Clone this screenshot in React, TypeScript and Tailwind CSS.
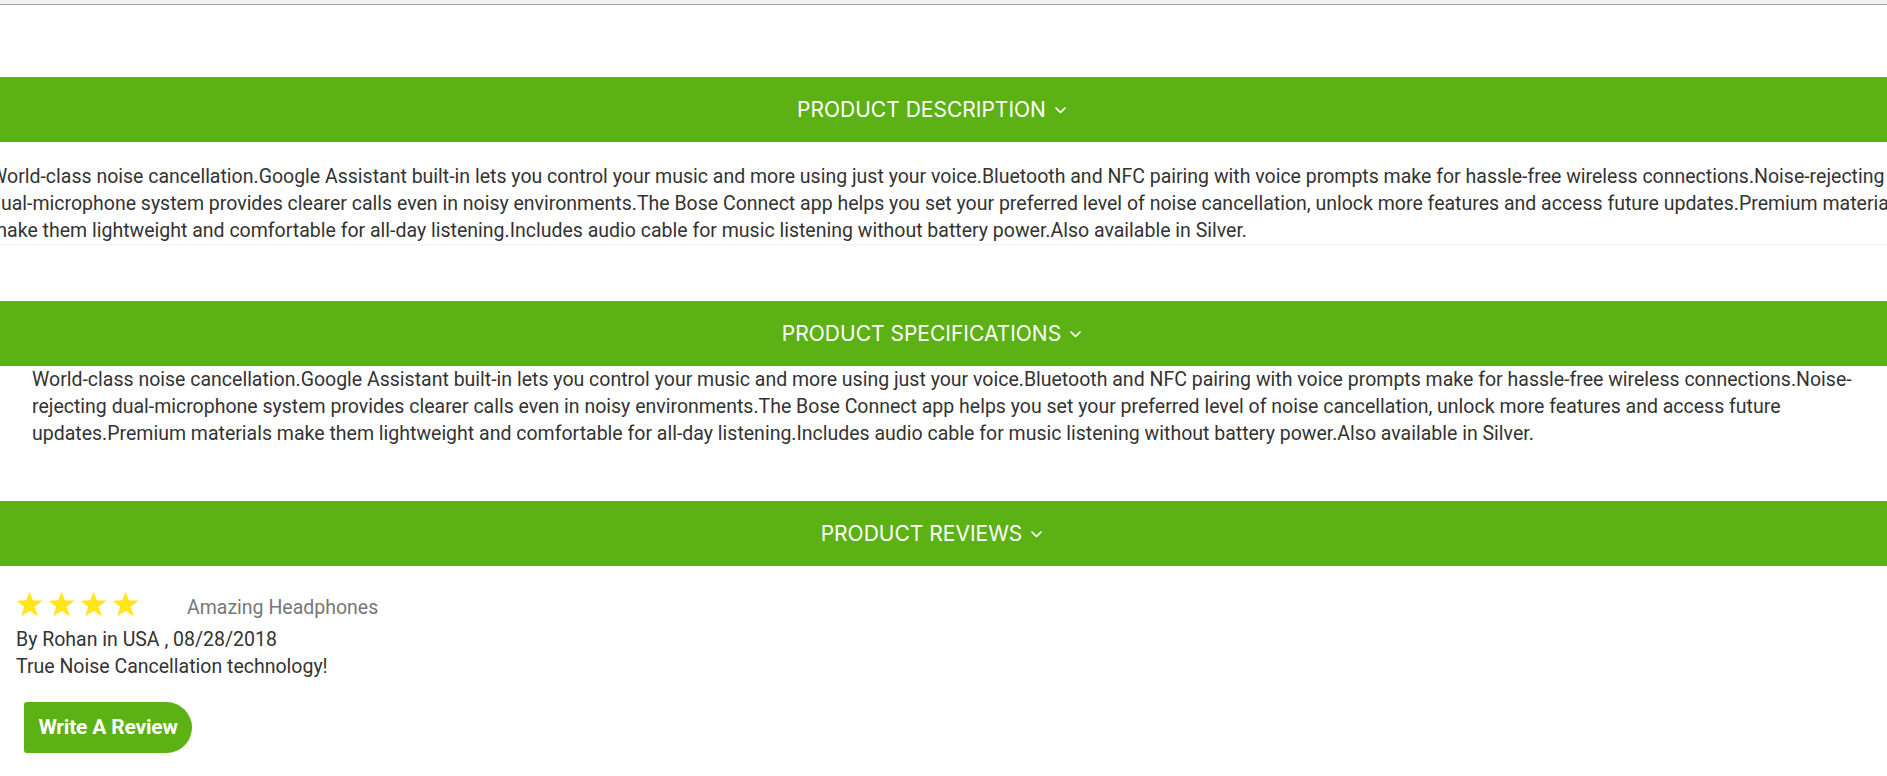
import React from "react";

const TEXT =
  "World-class noise cancellation.Google Assistant built-in lets you control your music and more using just your voice.Bluetooth and NFC pairing with voice prompts make for hassle-free wireless connections.Noise-rejecting dual-microphone system provides clearer calls even in noisy environments.The Bose Connect app helps you set your preferred level of noise cancellation, unlock more features and access future updates.Premium materials make them lightweight and comfortable for all-day listening.Includes audio cable for music listening without battery power.Also available in Silver.";

function Chevron() {
  return (
    <svg width="11" height="7" viewBox="0 0 11 7" className="ml-[9px] mt-[2px]">
      <polyline points="1,1 5.5,5.5 10,1" fill="none" stroke="white" strokeWidth="1.7" strokeLinecap="round" strokeLinejoin="round" />
    </svg>
  );
}

function Bar({ title }: { title: string }) {
  return (
    <div className="flex h-[65px] items-center justify-center bg-[#5cb115] pr-[24px] text-white">
      <span className="font-['Inter',sans-serif] text-[21px] leading-none tracking-[0px]">{title}</span>
      <Chevron />
    </div>
  );
}

function Star() {
  return (
    <svg width="27" height="26" viewBox="0 0 24 23">
      <polygon
        points="12,0.5 15,8.2 23.5,8.6 16.8,14 19.2,22.3 12,17.5 4.8,22.3 7.2,14 0.5,8.6 9,8.2"
        fill="#fde619"
      />
    </svg>
  );
}

export default function App() {
  return (
    <div className="min-h-[776px] w-full overflow-hidden bg-white font-['Roboto',sans-serif]">
      <div className="h-[5px] border-b border-[#a3a3a3] bg-[#f1f1f1]" />
      <div className="mt-[72px]">
        <Bar title="PRODUCT DESCRIPTION" />
        <div className="ml-[-10px] mr-[-23px] border-b border-[#f2f2f2] pt-[21px] text-[19.5px] leading-[27px] text-[#333]">
          {TEXT}
        </div>
      </div>
      <div className="mt-[56px]">
        <Bar title="PRODUCT SPECIFICATIONS" />
        <div className="pl-[32px] pr-[24px] text-[19.5px] leading-[27px] text-[#333]">{TEXT}</div>
      </div>
      <div className="mt-[54px]">
        <Bar title="PRODUCT REVIEWS" />
        <div className="pl-[16px] pt-[23px]">
          <div className="flex h-[30px] items-center">
            <div className="flex gap-[5px]">
              <Star />
              <Star />
              <Star />
              <Star />
            </div>
            <span className="ml-[48px] mt-[8px] text-[19.5px] text-[#777]">Amazing Headphones</span>
          </div>
          <div className="mt-[7px] text-[19.5px] leading-[27px] text-[#333]">
            <div>By Rohan in USA , 08/28/2018</div>
            <div>True Noise Cancellation technology!</div>
          </div>
          <button className="ml-[8px] mt-[22px] flex h-[51px] w-[168px] items-center justify-center rounded-l-[3px] rounded-r-[26px] bg-[#5cb115] text-[21px] font-bold tracking-[-0.2px] text-white">
            Write A Review
          </button>
        </div>
      </div>
    </div>
  );
}
